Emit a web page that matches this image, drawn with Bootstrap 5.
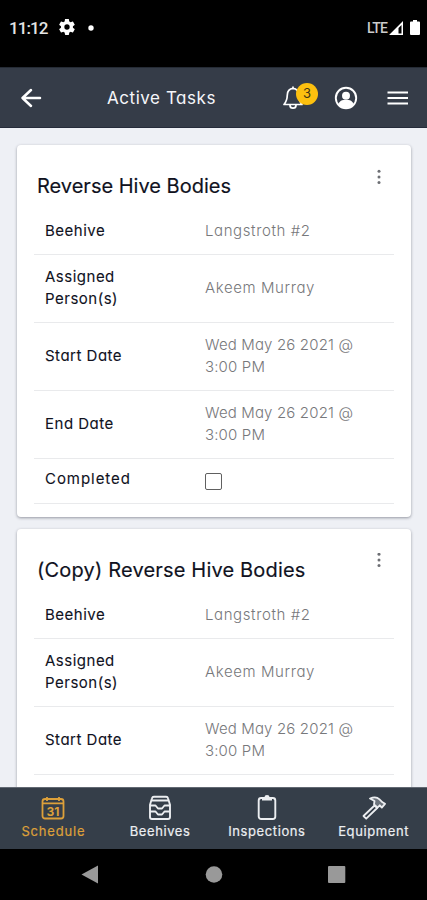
<!DOCTYPE html>
<html lang="en">
<head>
<meta charset="utf-8">
<meta name="viewport" content="width=device-width, initial-scale=1">
<title>Active Tasks</title>
<link href="https://cdn.jsdelivr.net/npm/bootstrap@5.3.0/dist/css/bootstrap.min.css" rel="stylesheet">
<style>
html, body { height: 900px; overflow: hidden; }
body { font-family: Inter, Roboto, "Liberation Sans", sans-serif; font-feature-settings: "cv11"; background: #000; color: #10121e; }
svg { display: block; flex: none; }
.phone { width: 427px; height: 900px; }
.statusbar { height: 67px; padding: 0 7px 12px 9px; color: #e4e4e4; font: 500 17px Roboto, sans-serif; }
.clock { letter-spacing: -.9px; width: 40px; }
.gear { margin: -1px 0 0 8px; }
.lte { font: 500 14px Roboto, sans-serif; letter-spacing: -.8px; color: #ccc; margin-right: 2px; }
.battery { margin-left: 7px; }
.appbar { height: 61px; background: #353c48; color: #f5f6fa; padding: 0 18px 0 20px; border-bottom: 1px solid #252b3a; border-top: 1px solid #252b35; }
.page-title { font-size: 17px; letter-spacing: .55px; margin-left: 65px; padding-top: 2px; }
.account { margin-left: 31px; }
.menu { margin-left: 29px; }
.count { left: 13px; top: -3px; width: 22px; height: 22px; background: #fdc00f; color: #423414; font-size: 13px; line-height: 20px; }
.screen { height: 659px; background: #eef0f5; padding: 17px 16px 0 17px; }
.task { border: 0; border-radius: 4px; background: #fff; height: 372px; margin-bottom: 12px; padding: 0 17px; box-shadow: 0 1px 3px rgba(40,45,60,.45); color: #10121e; }
.task-head { height: 64px; padding: 24px 12px 0 3px; }
.task-name { font-size: 20px; line-height: 35px; font-weight: 400; letter-spacing: 0; -webkit-text-stroke: .15px; }
.task-name.copy { letter-spacing: .18px; }
.field { min-height: 45px; padding: 11px; border-bottom: 1px solid #e9eaec; font-size: 15px; line-height: 22.5px; }
.field.two { height: 68px; }
.field-name { width: 160px; flex: none; letter-spacing: .5px; -webkit-text-stroke: .1px; }
.field-value { color: #77787b; font-weight: 300; letter-spacing: .15px; }
.field-value.wide { letter-spacing: .6px; }
.done .field-name { letter-spacing: .95px; margin-top: -2px; }
.tick { width: 17px; height: 17px; border: 1.5px solid #606060; border-radius: 2px; margin: 1px 0 0; background: #fff; display: block; }
.tabs { height: 62px; background: #353e49; color: #eceef1; border-top: 1px solid #626973; padding-top: 7px; }
.tab-item { width: 25%; font-size: 13px; line-height: 20px; letter-spacing: .6px; color: inherit; -webkit-text-stroke: .2px; }
.tab-item.on { color: #dda03a; letter-spacing: .8px; }
.tab-item text { letter-spacing: 0; }
.softkeys { height: 51px; }
</style>
</head>
<body>
<div class="phone d-flex flex-column overflow-hidden">
  <div class="statusbar d-flex align-items-center flex-shrink-0">
    <span class="clock">11:12</span>
    <svg class="gear" width="20" height="20" viewBox="0 0 24 24" fill="#fff"><path d="M19.1 12.9a7 7 0 0 0 0-1.8l2-1.6c.2-.1.2-.4.1-.6l-1.9-3.3c-.1-.2-.4-.3-.6-.2l-2.4 1a7 7 0 0 0-1.6-1l-.4-2.5c0-.2-.2-.4-.5-.4h-3.8c-.2 0-.4.2-.5.4l-.3 2.5a7 7 0 0 0-1.6 1l-2.4-1c-.2-.1-.5 0-.6.2L2.7 8.900c-.1.2 0 .5.1.6l2 1.600a7 7 0 0 0 0 1.8l-2 1.600c-.1.1-.2.4-.1.6l1.900 3.300c.1.2.4.3.6.2l2.400-1a7 7 0 0 0 1.600 1l.4 2.500c0 .2.2.4.5.4h3.800c.2 0 .4-.2.5-.4l.3-2.500a7 7 0 0 0 1.600-1l2.400 1c.2.1.5 0 .6-.2l1.900-3.300c.1-.2 0-.5-.1-.6zM12 15.200a3.200 3.200 0 1 1 0-6.400 3.200 3.200 0 0 1 0 6.400z"/></svg>
    <svg class="ms-2" width="12" height="8" viewBox="0 0 12 8"><circle cx="6" cy="4" r="2.700" fill="#fff"/></svg>
    <span class="lte ms-auto">LTE</span>
    <svg width="14" height="14" viewBox="0 0 14 14"><path fill="#fff" fill-rule="evenodd" d="M0 14 14 0v14zM9.500 12.500h3V4l-3 3z"/></svg>
    <svg class="battery" width="10" height="15" viewBox="0 0 10 15"><path fill="#fff" d="M3 0h4v1.500h2a1 1 0 0 1 1 1V14a1 1 0 0 1-1 1H1a1 1 0 0 1-1-1V2.500a1 1 0 0 1 1-1h2z"/></svg>
  </div>

  <header class="appbar d-flex align-items-center flex-shrink-0">
    <svg width="22" height="20" viewBox="0 0 22 20" fill="none" stroke="#fff" stroke-width="2.500" stroke-linecap="round" stroke-linejoin="round"><path d="M11 2 2.500 10l8.500 8M2.500 10H20"/></svg>
    <h1 class="page-title mb-0 fw-normal text-nowrap">Active Tasks</h1>
    <div class="position-relative ms-auto">
      <svg width="20" height="24" viewBox="0 0 20 24" fill="none" stroke="#fff" stroke-width="1.700" stroke-linejoin="round"><path d="M10 2.400C6.500 2.700 4.400 5.500 4.300 9c-.1 4.500-.8 6.500-3.300 9.500h18c-2.500-3-3.200-5-3.300-9.500C15.600 5.500 13.500 2.700 10 2.400zM10 .5v2M7 19.200a3 3 0 0 0 6 0"/></svg>
      <span class="count position-absolute rounded-circle text-center">3</span>
    </div>
    <svg class="account" width="24" height="24" viewBox="0 0 24 24"><circle cx="12" cy="12" r="10.200" fill="none" stroke="#fff" stroke-width="1.900"/><circle cx="12" cy="9.800" r="4" fill="#fff"/><path fill="#fff" d="M4.500 18c1-2.700 3-3.700 5-4h5c2 .3 4 1.300 5 4-2 3-4.500 4-7.500 4s-5.500-1-7.500-4z"/></svg>
    <svg class="menu" width="22" height="16" viewBox="0 0 22 16" stroke="#fff" stroke-width="2.200"><path d="M.5 2.500h20.500M.5 8h20.500M.5 13.500h20.500"/></svg>
  </header>

  <main class="screen flex-shrink-0 overflow-hidden">
    <section class="card task">
      <div class="task-head d-flex justify-content-between">
        <h2 class="task-name mb-0 text-nowrap">Reverse Hive Bodies</h2>
        <svg width="6" height="16" viewBox="0 0 6 16" fill="#6d6f74"><circle cx="3" cy="2.200" r="1.500"/><circle cx="3" cy="7.900" r="1.500"/><circle cx="3" cy="13.600" r="1.500"/></svg>
      </div>
      <div class="field d-flex align-items-center"><div class="field-name">Beehive</div><div class="field-value wide">Langstroth #2</div></div>
      <div class="field two d-flex align-items-center"><div class="field-name">Assigned<br>Person(s)</div><div class="field-value wide">Akeem Murray</div></div>
      <div class="field two d-flex align-items-center"><div class="field-name">Start Date</div><div class="field-value">Wed May 26 2021 @<br>3:00 PM</div></div>
      <div class="field two d-flex align-items-center"><div class="field-name">End Date</div><div class="field-value">Wed May 26 2021 @<br>3:00 PM</div></div>
      <div class="field done d-flex align-items-center"><div class="field-name">Completed</div><div class="field-value"><span class="tick"></span></div></div>
    </section>
    <section class="card task">
      <div class="task-head d-flex justify-content-between">
        <h2 class="task-name copy mb-0 text-nowrap">(Copy) Reverse Hive Bodies</h2>
        <svg width="6" height="16" viewBox="0 0 6 16" fill="#6d6f74"><circle cx="3" cy="1.200" r="1.500"/><circle cx="3" cy="6.900" r="1.500"/><circle cx="3" cy="12.600" r="1.500"/></svg>
      </div>
      <div class="field d-flex align-items-center"><div class="field-name">Beehive</div><div class="field-value wide">Langstroth #2</div></div>
      <div class="field two d-flex align-items-center"><div class="field-name">Assigned<br>Person(s)</div><div class="field-value wide">Akeem Murray</div></div>
      <div class="field two d-flex align-items-center"><div class="field-name">Start Date</div><div class="field-value">Wed May 26 2021 @<br>3:00 PM</div></div>
    </section>
  </main>

  <nav class="tabs d-flex flex-shrink-0">
    <a class="tab-item on d-flex flex-column align-items-center text-decoration-none">
      <svg width="24" height="26" viewBox="0 0 24 26" fill="none" stroke="currentColor"><rect x="1.500" y="4" width="21" height="19.500" rx="2.500" stroke-width="1.800"/><path d="M1.500 8.300h21M6 2v4M18 2v4" stroke-width="1.800"/><text x="12" y="20.500" text-anchor="middle" font-size="12" font-weight="700" fill="currentColor" stroke="none">31</text></svg>
      <span>Schedule</span></a>
    <a class="tab-item d-flex flex-column align-items-center text-decoration-none">
      <svg width="24" height="26" viewBox="0 0 24 26" fill="none" stroke="currentColor" stroke-width="1.900" stroke-linejoin="round"><path d="M6 1.800h12a2 2 0 0 1 2 1.500l2 6.500V22a2 2 0 0 1-2 2H4a2 2 0 0 1-2-2V9.800l2-6.500a2 2 0 0 1 2-1.500zM4 5.500h16M2 10.500h5.500l2.500 3h4l2.500-3H22M2 16.500h5.500l2.500 3h4l2.500-3H22"/></svg>
      <span>Beehives</span></a>
    <a class="tab-item d-flex flex-column align-items-center text-decoration-none">
      <svg width="20" height="26" viewBox="0 0 20 26" fill="none" stroke="currentColor" stroke-width="1.900"><rect x="1.700" y="3" width="16.600" height="21" rx="2.500"/><path fill="currentColor" stroke="none" d="M5 2h2.500a2.500 2 0 0 1 5 0H15v3.500H5z"/></svg>
      <span>Inspections</span></a>
    <a class="tab-item d-flex flex-column align-items-center text-decoration-none">
      <svg width="24" height="26" viewBox="0 0 24 26" fill="none" stroke="currentColor" stroke-width="1.800" stroke-linejoin="round"><path d="m12.500 10.500-11 10.500 2.700 2.700 11-10.700z"/><path fill="currentColor" fill-opacity=".3" d="M8 3.500c4-1.700 7-1.500 9.500.8l3 3 2.500 1.500-3.200 3.800-2-2.300-2.300 2.300-3.500-3.300.5-3.300z"/></svg>
      <span>Equipment</span></a>
  </nav>

  <div class="softkeys flex-shrink-0">
    <svg width="427" height="51" viewBox="0 0 427 51" fill="#999"><path d="M81.500 25.500 98 16.500v18z"/><circle cx="214" cy="25.500" r="8.300"/><rect x="328" y="17" width="17.300" height="17" rx="1"/></svg>
  </div>
</div>
<script src="https://cdn.jsdelivr.net/npm/bootstrap@5.3.0/dist/js/bootstrap.bundle.min.js"></script>
</body>
</html>
